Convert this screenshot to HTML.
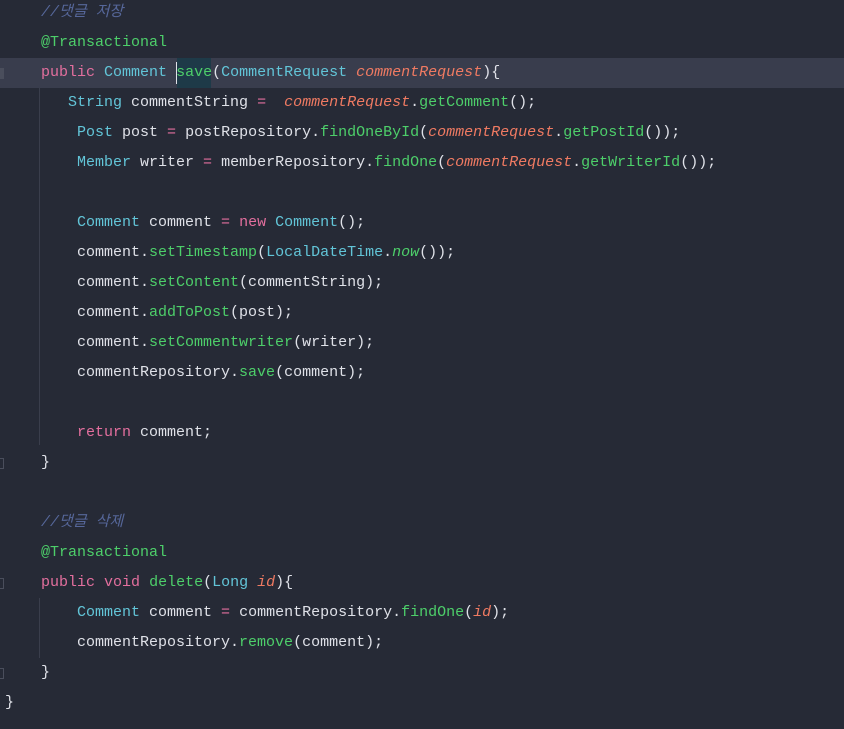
<!DOCTYPE html>
<html><head><meta charset="utf-8"><style>
body{margin:0;width:844px;height:729px;background:#262a36;overflow:hidden;position:relative;font-family:"Liberation Mono","Noto Sans CJK KR",monospace;font-size:15px;color:#dfe1e8}
.l{position:absolute;left:5px;height:30px;line-height:30px;white-space:pre}
.k{color:#e36f9e}.t{color:#62c5d8}.m{color:#4dcf6a}.p{color:#ef7a62;font-style:italic}.c{color:#56679a;font-style:italic}.i{font-style:italic}
.hl{position:absolute;left:0;top:58px;width:844px;height:30px;background:#393d4d}
.g{position:absolute;left:39px;width:1px;background:#3a3e4c}
.cur{position:absolute;left:176px;top:62px;width:1px;height:22px;background:#dfe1e8}
.sv{position:absolute;left:177px;top:58px;width:34px;height:30px;background:#1e3a48}
.f{position:absolute;left:0;width:3px;height:9px;border:1px solid #4a4e5c;border-left:none}
</style></head><body>
<div class="hl"></div><div class="sv"></div><div class="cur"></div>
<div class="g" style="top:88px;height:357px"></div>
<div class="g" style="top:598px;height:60px"></div>
<div class="f" style="top:68px;background:#4a4e5c"></div>
<div class="f" style="top:458px"></div>
<div class="f" style="top:578px"></div>
<div class="f" style="top:668px"></div>
<div class="l" style="top:-2px">    <span class="c">//댓글 저장</span></div>
<div class="l" style="top:28px">    <span class="m">@Transactional</span></div>
<div class="l" style="top:58px">    <span class="k">public</span> <span class="t">Comment</span> <span class="m">save</span>(<span class="t">CommentRequest</span> <span class="p">commentRequest</span>){</div>
<div class="l" style="top:88px">       <span class="t">String</span> commentString <span class="k">=</span>  <span class="p">commentRequest</span>.<span class="m">getComment</span>();</div>
<div class="l" style="top:118px">        <span class="t">Post</span> post <span class="k">=</span> postRepository.<span class="m">findOneById</span>(<span class="p">commentRequest</span>.<span class="m">getPostId</span>());</div>
<div class="l" style="top:148px">        <span class="t">Member</span> writer <span class="k">=</span> memberRepository.<span class="m">findOne</span>(<span class="p">commentRequest</span>.<span class="m">getWriterId</span>());</div>
<div class="l" style="top:208px">        <span class="t">Comment</span> comment <span class="k">=</span> <span class="k">new</span> <span class="t">Comment</span>();</div>
<div class="l" style="top:238px">        comment.<span class="m">setTimestamp</span>(<span class="t">LocalDateTime</span>.<span class="m i">now</span>());</div>
<div class="l" style="top:268px">        comment.<span class="m">setContent</span>(commentString);</div>
<div class="l" style="top:298px">        comment.<span class="m">addToPost</span>(post);</div>
<div class="l" style="top:328px">        comment.<span class="m">setCommentwriter</span>(writer);</div>
<div class="l" style="top:358px">        commentRepository.<span class="m">save</span>(comment);</div>
<div class="l" style="top:418px">        <span class="k">return</span> comment;</div>
<div class="l" style="top:448px">    }</div>
<div class="l" style="top:508px">    <span class="c">//댓글 삭제</span></div>
<div class="l" style="top:538px">    <span class="m">@Transactional</span></div>
<div class="l" style="top:568px">    <span class="k">public</span> <span class="k">void</span> <span class="m">delete</span>(<span class="t">Long</span> <span class="p">id</span>){</div>
<div class="l" style="top:598px">        <span class="t">Comment</span> comment <span class="k">=</span> commentRepository.<span class="m">findOne</span>(<span class="p">id</span>);</div>
<div class="l" style="top:628px">        commentRepository.<span class="m">remove</span>(comment);</div>
<div class="l" style="top:658px">    }</div>
<div class="l" style="top:688px">}</div>
</body></html>
